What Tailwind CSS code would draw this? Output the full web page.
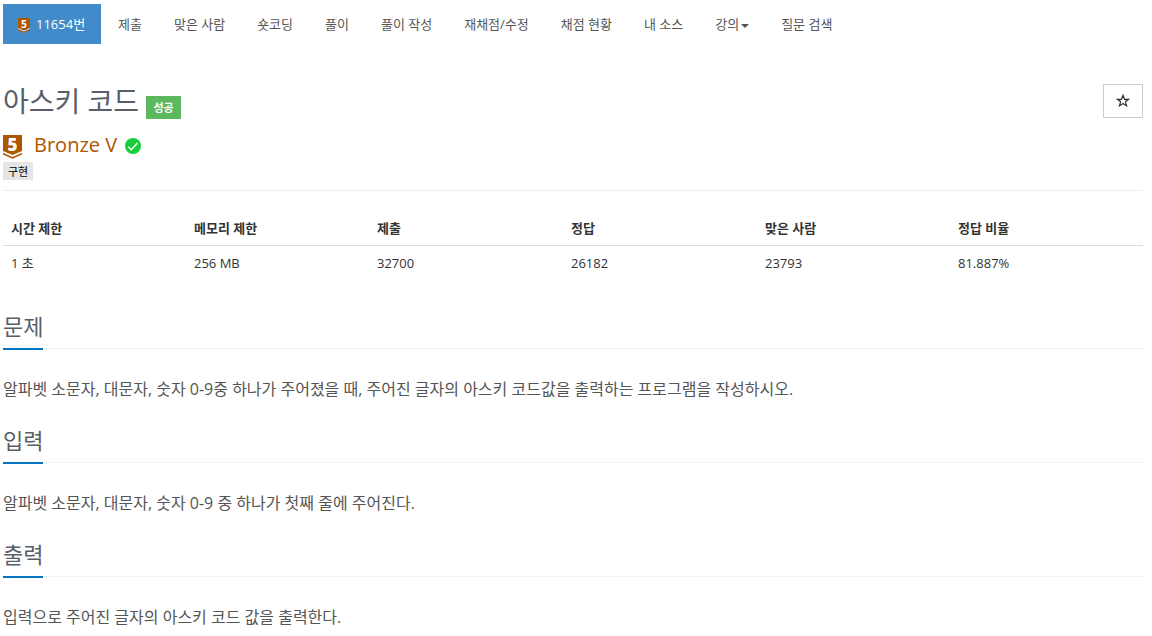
<!DOCTYPE html>
<html lang="ko">
<head>
  <meta charset="UTF-8" />
  <meta name="viewport" content="width=device-width, initial-scale=1.0" />
  <title>11654번: 아스키 코드</title>
  <script src="https://cdn.jsdelivr.net/npm/@tailwindcss/browser@4"></script>
</head>
<body class="bg-white text-[#333] text-[13px] leading-[20px] font-['Open_Sans','Noto_Sans_CJK_KR',sans-serif] pl-[3px] pr-[9px] pt-1 overflow-hidden">
  <nav class="flex gap-[2px] h-10 text-[#555] whitespace-nowrap">
    <a href="#" class="flex items-center w-[98px] pl-[15px] bg-[#428bca] text-white">
      <svg class="w-3 h-[15px] mr-[6px] mt-[2px] overflow-visible" viewBox="0 0 20 25">
        <path d="M0 0h20v17l-10 4l-10-4z" fill="#ad5600" />
        <path d="M0 17.5l10 4.5l10-4.5" fill="none" stroke="#fff" stroke-width="1.5" />
        <path d="M0 18.5l10 4.5l10-4.5v2l-10 4.5l-10-4.5z" fill="#ad5600" />
        <text x="10" y="16" text-anchor="middle" font-size="17" font-weight="700" fill="#fff">5</text>
      </svg>
      11654번
    </a>
    <a href="#" class="px-[15px] py-[10px]">제출</a>
    <a href="#" class="px-[15px] py-[10px]">맞은 사람</a>
    <a href="#" class="px-[15px] py-[10px]">숏코딩</a>
    <a href="#" class="px-[15px] py-[10px]">풀이</a>
    <a href="#" class="px-[15px] py-[10px]">풀이 작성</a>
    <a href="#" class="px-[15px] py-[10px]">재채점/수정</a>
    <a href="#" class="px-[15px] py-[10px]">채점 현황</a>
    <a href="#" class="px-[15px] py-[10px]">내 소스</a>
    <a href="#" class="flex items-center px-[15px] py-[10px]">강의<span class="ml-[2px] mt-[3px] border-x-4 border-t-4 border-x-transparent border-t-[#555]"></span></a>
    <a href="#" class="px-[15px] py-[10px]">질문 검색</a>
  </nav>

  <!-- 문제 제목 -->
  <header class="h-[147px] pt-10 border-b border-[#eee]">
    <div class="flex justify-between h-[50px]">
      <div class="flex">
        <h1 class="text-[28px] leading-[34px] text-[#585f69]">아스키 코드</h1>
        <span class="ml-[7px] mt-3 w-[35px] h-[23px] bg-[#5cb85c] text-white text-[11px] leading-[23px] font-bold text-center">성공</span>
      </div>
      <button class="flex items-center justify-center w-10 h-[34px] pr-[1px] pb-[1px] border border-[#ccc]">
        <svg class="w-[14px] h-[14px]" viewBox="0 0 14 14" fill="none" stroke="#333" stroke-width="1.2">
          <path d="M7 1.3l1.5 4h4.2l-3.3 2.5l1.2 4.1l-3.6-2.4l-3.6 2.4l1.2-4.1l-3.3-2.5h4.2z" />
        </svg>
      </button>
    </div>
    <div class="flex h-[28px] text-[20px] leading-[22px] text-[#ad5600]">
      <svg class="w-5 h-[25px] mr-[11px] overflow-visible" viewBox="0 0 20 25">
        <path d="M0 1h19v16l-9.5 4l-9.5-4z" fill="#ad5600" />
        <path d="M0 18.8l9.5 4.2l9.5-4.2v1.8l-9.5 4.2l-9.5-4.2z" fill="#ad5600" />
        <text x="9.5" y="16.5" text-anchor="middle" font-size="17" font-weight="800" fill="#fff">5</text>
      </svg>
      Bronze V
      <svg class="w-4 h-4 ml-2 mt-1" viewBox="0 0 16 16">
        <circle cx="8" cy="8" r="8" fill="#19ce3c" />
        <path d="M3.3 8.7l3 3l6.2-6.7" fill="none" stroke="#fff" stroke-width="1.5" />
      </svg>
    </div>
    <span class="block w-[30px] h-[18px] bg-[#e5e5e5] text-black text-[11px] leading-[19px] text-center">구현</span>
  </header>

  <table class="w-full mt-5 table-fixed text-left">
    <thead>
      <tr class="h-[34px] border-b border-[#ddd]">
        <th class="w-[183px] px-2">시간 제한</th>
        <th class="w-[183px] px-2">메모리 제한</th>
        <th class="w-[194px] px-2">제출</th>
        <th class="w-[194px] px-2">정답</th>
        <th class="w-[193px] px-2">맞은 사람</th>
        <th class="px-2">정답 비율</th>
      </tr>
    </thead>
    <tbody>
      <tr class="h-9">
        <td class="px-2">1 초</td>
        <td class="px-2">256 MB</td>
        <td class="px-2">32700</td>
        <td class="px-2">26182</td>
        <td class="px-2">23793</td>
        <td class="px-2">81.887%</td>
      </tr>
    </tbody>
  </table>

  <main class="mt-[31px] text-[#555]">
    <section class="h-[114px]">
      <div class="h-[37px] border-b border-dotted border-[#e4e9f0]">
        <h2 class="inline-block h-[38px] text-[22px] leading-[29px] text-[#585f69] border-b-2 border-[#0076c0]">문제</h2>
      </div>
      <p class="mt-[27px] text-base leading-[26px]">알파벳 소문자, 대문자, 숫자 0-9중 하나가 주어졌을 때, 주어진 글자의 아스키 코드값을 출력하는 프로그램을 작성하시오.</p>
    </section>
    <section class="h-[114px]">
      <div class="h-[37px] border-b border-dotted border-[#e4e9f0]">
        <h2 class="inline-block h-[38px] text-[22px] leading-[29px] text-[#585f69] border-b-2 border-[#0076c0]">입력</h2>
      </div>
      <p class="mt-[27px] text-base leading-[26px]">알파벳 소문자, 대문자, 숫자 0-9 중 하나가 첫째 줄에 주어진다.</p>
    </section>
    <section class="h-[114px]">
      <div class="h-[37px] border-b border-dotted border-[#e4e9f0]">
        <h2 class="inline-block h-[38px] text-[22px] leading-[29px] text-[#585f69] border-b-2 border-[#0076c0]">출력</h2>
      </div>
      <p class="mt-[27px] text-base leading-[26px]">입력으로 주어진 글자의 아스키 코드 값을 출력한다.</p>
    </section>
  </main>
</body>
</html>
